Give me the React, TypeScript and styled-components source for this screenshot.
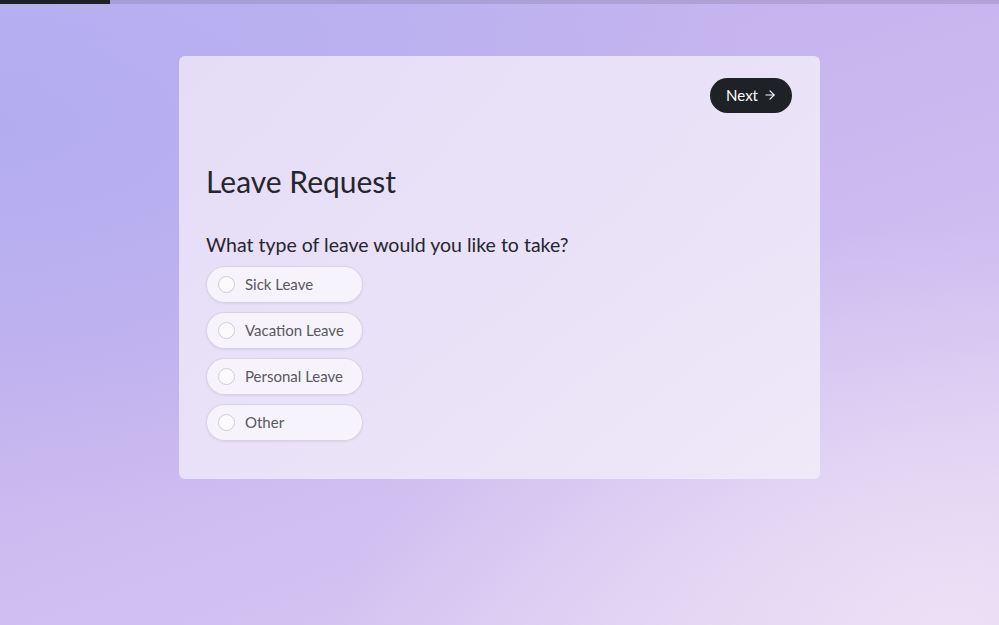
import React, { useState } from 'react';
import styled, { createGlobalStyle } from 'styled-components';

const GlobalStyle = createGlobalStyle`
  html, body {
    margin: 0;
    padding: 0;
  }
  body {
    font-family: Lato, 'Open Sans', 'Liberation Sans', sans-serif;
    color: #22232a;
  }
`;

const options = ['Sick Leave', 'Vacation Leave', 'Personal Leave', 'Other'];

const App = () => {
  const [selected, setSelected] = useState<string | null>(null);

  return (
    <>
      <GlobalStyle />
      <StyledPage>
        <StyledProgressTrack>
          <StyledProgressFill $percent={11} />
        </StyledProgressTrack>
        <StyledCard>
          <StyledHeader>
            <StyledNextButton type="button">
              Next
              <svg width="14" height="14" viewBox="0 0 24 24" fill="none" stroke="currentColor" strokeWidth="2" strokeLinecap="round" strokeLinejoin="round">
                <path d="M5 12h14" />
                <path d="M12 5l7 7-7 7" />
              </svg>
            </StyledNextButton>
          </StyledHeader>
          <StyledTitle>Leave Request</StyledTitle>
          <StyledQuestion>What type of leave would you like to take?</StyledQuestion>
          <StyledOptionList>
            {options.map((option) => (
              <StyledOption key={option} onClick={() => setSelected(option)}>
                <StyledRadio $checked={selected === option} />
                <span>{option}</span>
              </StyledOption>
            ))}
          </StyledOptionList>
        </StyledCard>
      </StyledPage>
    </>
  );
};

export default App;

const StyledPage = styled.div`
  min-height: 100vh;
  display: flex;
  flex-direction: column;
  align-items: center;
  background:
    radial-gradient(ellipse at 95% 100%, rgba(236, 226, 245, 0.9) 0%, rgba(236, 226, 245, 0) 45%),
    radial-gradient(ellipse at 0% 20%, rgba(178, 172, 240, 0.9) 0%, rgba(178, 172, 240, 0) 55%),
    linear-gradient(160deg, #bcb3f0 0%, #c7b5ef 35%, #d1c0f1 70%, #e0d3f4 100%);
`;

const StyledProgressTrack = styled.div`
  width: 100%;
  height: 4px;
  background-color: rgba(130, 120, 160, 0.3);
`;

const StyledProgressFill = styled.div<{ $percent: number }>`
  width: ${({ $percent }) => $percent}%;
  height: 100%;
  background-color: #1f2026;
`;

const StyledCard = styled.div`
  box-sizing: border-box;
  width: 641px;
  margin-top: 52px;
  padding: 22px 28px 38px 27px;
  border-radius: 6px;
  background: linear-gradient(135deg, rgba(233, 225, 247, 0.92) 0%, rgba(240, 234, 249, 0.92) 100%);
  display: flex;
  flex-direction: column;
`;

const StyledHeader = styled.div`
  display: flex;
  justify-content: flex-end;
`;

const StyledNextButton = styled.button`
  display: flex;
  align-items: center;
  gap: 5px;
  height: 35px;
  padding: 0 15px 1px 16px;
  border: none;
  border-radius: 18px;
  background-color: #1e2126;
  color: #ffffff;
  font-family: inherit;
  font-size: 15px;
  cursor: pointer;
`;

const StyledTitle = styled.h1`
  margin: 50px 0 0;
  font-size: 30px;
  line-height: 36px;
  font-weight: 400;
  color: #25262d;
`;

const StyledQuestion = styled.h2`
  margin: 34px 0 0;
  font-size: 19.5px;
  line-height: 24px;
  font-weight: 400;
  color: #25262d;
`;

const StyledOptionList = styled.div`
  display: flex;
  flex-direction: column;
  align-items: flex-start;
  gap: 9px;
  margin-top: 9px;
`;

const StyledOption = styled.label`
  box-sizing: border-box;
  display: flex;
  align-items: center;
  gap: 10px;
  width: 157px;
  height: 37px;
  padding: 0 0 1px 11px;
  border: 1px solid rgba(190, 184, 205, 0.55);
  border-radius: 19px;
  background-color: rgba(250, 248, 253, 0.8);
  box-shadow: 0 1px 2px rgba(60, 40, 100, 0.08);
  font-size: 15px;
  color: #585860;
  cursor: pointer;
`;

const StyledRadio = styled.span<{ $checked: boolean }>`
  box-sizing: border-box;
  flex-shrink: 0;
  width: 17px;
  height: 17px;
  border-radius: 50%;
  border: ${({ $checked }) => ($checked ? '5px solid #1e2126' : '1px solid #cfcbd8')};
  background-color: #fbfafd;
`;
